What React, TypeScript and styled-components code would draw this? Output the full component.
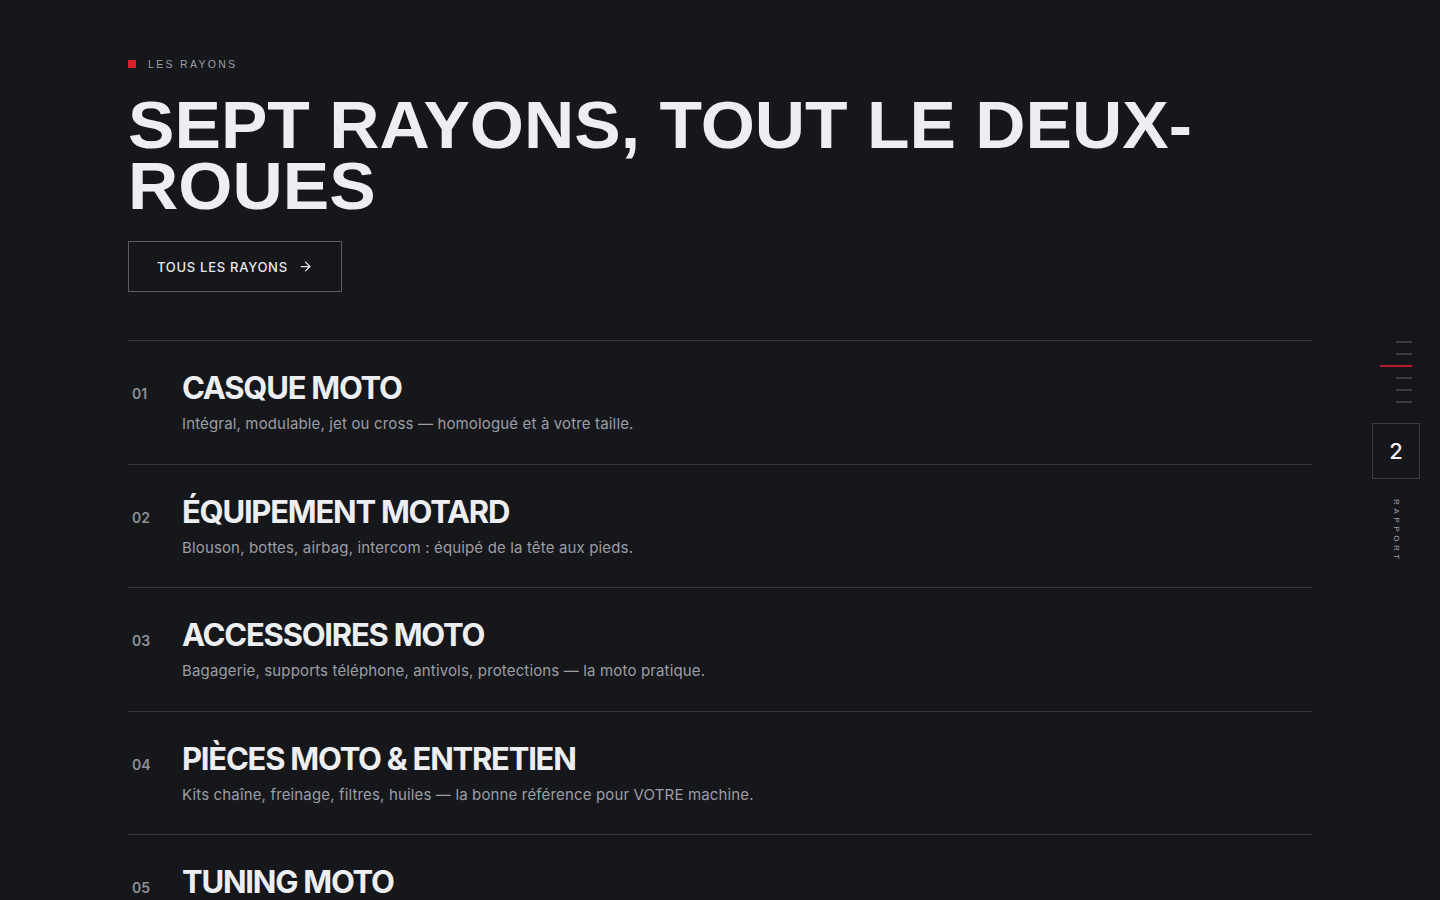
import React from 'react';
import styled, { createGlobalStyle } from 'styled-components';
import { ArrowRight } from 'lucide-react';

const GlobalStyle = createGlobalStyle`
  html, body { margin: 0; padding: 0; background: #16171b; }
  body { font-family: Inter, "Liberation Sans", sans-serif; color: #ecedf0; overflow: hidden; }
  * { box-sizing: border-box; }
`;

const Page = styled.div`
  height: 900px;
  display: grid;
  grid-template-columns: 1fr 68px;
  overflow: hidden;
`;

const Main = styled.main`
  padding: 57px 60px 0 128px;
`;

const Eyebrow = styled.div`
  display: flex;
  align-items: center;
  gap: 12px;
  font-size: 10.5px;
  letter-spacing: 0.22em;
  color: #9c9ea5;
  font-family: "Liberation Sans", Arial, sans-serif;
  text-transform: uppercase;
  height: 14px;
`;

const RedSquare = styled.span`
  width: 8px;
  height: 8px;
  background: #d7212c;
`;

const Heading = styled.h1`
  margin: 24px 0 0;
  font-family: "Liberation Sans", Arial, sans-serif;
  font-weight: 700;
  font-size: 66px;
  line-height: 61px;
  letter-spacing: 0;
  color: #eceef2;
  text-transform: uppercase;
  transform: scaleX(1.055);
  transform-origin: left;
  max-width: 1030px;
`;

const Button = styled.button`
  margin-top: 24px;
  display: inline-flex;
  align-items: center;
  gap: 10px;
  height: 51px;
  padding: 0 28px;
  background: transparent;
  border: 1px solid #5b5d63;
  color: #e6e7ea;
  font-family: Inter, sans-serif;
  font-size: 13px;
  font-weight: 500;
  letter-spacing: 0.055em;
  cursor: pointer;
`;

const List = styled.ul`
  list-style: none;
  margin: 48px 0 0;
  padding: 0;
  width: 1184px;
  border-top: 1px solid #34363b;
`;

const Row = styled.li`
  display: grid;
  grid-template-columns: 54px 1fr;
  align-items: baseline;
  height: 123.5px;
  padding-top: 28px;
  border-bottom: 1px solid #34363b;
`;

const Num = styled.span`
  padding-left: 4px;
  font-size: 14px;
  font-weight: 600;
  color: #8d9096;
  font-family: Inter, sans-serif;
`;

const Title = styled.h2`
  margin: 0;
  font-family: Inter, "Liberation Sans", sans-serif;
  font-size: 31px;
  font-weight: 700;
  letter-spacing: -0.04em;
  color: #eceef2;
  line-height: 37px;
`;

const Desc = styled.p`
  margin: 8px 0 0;
  font-size: 15px;
  color: #9c9ea5;
  letter-spacing: 0.01em;
`;

const Rail = styled.aside`
  display: flex;
  flex-direction: column;
  align-items: center;
  width: 48px;
  padding-top: 341px;
`;

const Ticks = styled.div`
  display: flex;
  flex-direction: column;
  align-items: flex-end;
  gap: 10px;
  width: 32px;
`;

const Tick = styled.span<{ $active?: boolean }>`
  display: block;
  height: 2px;
  width: ${(p) => (p.$active ? '32px' : '16px')};
  background: ${(p) => (p.$active ? '#b51e2a' : '#3a3c41')};
`;

const PageBox = styled.div`
  margin-top: 20px;
  width: 48px;
  height: 56px;
  border: 1px solid #3a3c41;
  display: flex;
  align-items: center;
  justify-content: center;
  font-size: 22px;
  font-weight: 500;
  color: #f0f1f4;
`;

const VerticalLabel = styled.span`
  margin-top: 20px;
  writing-mode: vertical-rl;
  font-size: 8px;
  letter-spacing: 0.45em;
  color: #a3a5ab;
  font-family: "Liberation Sans", Arial, sans-serif;
`;

const items = [
  ['01', 'Casque moto', 'Intégral, modulable, jet ou cross — homologué et à votre taille.'],
  ['02', 'Équipement motard', 'Blouson, bottes, airbag, intercom : équipé de la tête aux pieds.'],
  ['03', 'Accessoires moto', 'Bagagerie, supports téléphone, antivols, protections — la moto pratique.'],
  ['04', 'Pièces moto & entretien', 'Kits chaîne, freinage, filtres, huiles — la bonne référence pour VOTRE machine.'],
  ['05', 'Tuning moto', 'Échappements, optiques, rétros, selles — personnalisez votre deux-roues.'],
];

const App: React.FC = () => {
  return (
    <Page>
      <GlobalStyle />
      <Main>
        <Eyebrow>
          <RedSquare />
          Les rayons
        </Eyebrow>
        <Heading>Sept rayons, tout le deux-roues</Heading>
        <Button>
          TOUS LES RAYONS <ArrowRight size={15} strokeWidth={2} />
        </Button>
        <List>
          {items.map(([n, t, d]) => (
            <Row key={n}>
              <Num>{n}</Num>
              <div>
                <Title>{t.toUpperCase()}</Title>
                <Desc>{d}</Desc>
              </div>
            </Row>
          ))}
        </List>
      </Main>
      <Rail>
        <Ticks>
          <Tick />
          <Tick />
          <Tick $active />
          <Tick />
          <Tick />
          <Tick />
        </Ticks>
        <PageBox>2</PageBox>
        <VerticalLabel>RAPPORT</VerticalLabel>
      </Rail>
    </Page>
  );
};

export default App;
